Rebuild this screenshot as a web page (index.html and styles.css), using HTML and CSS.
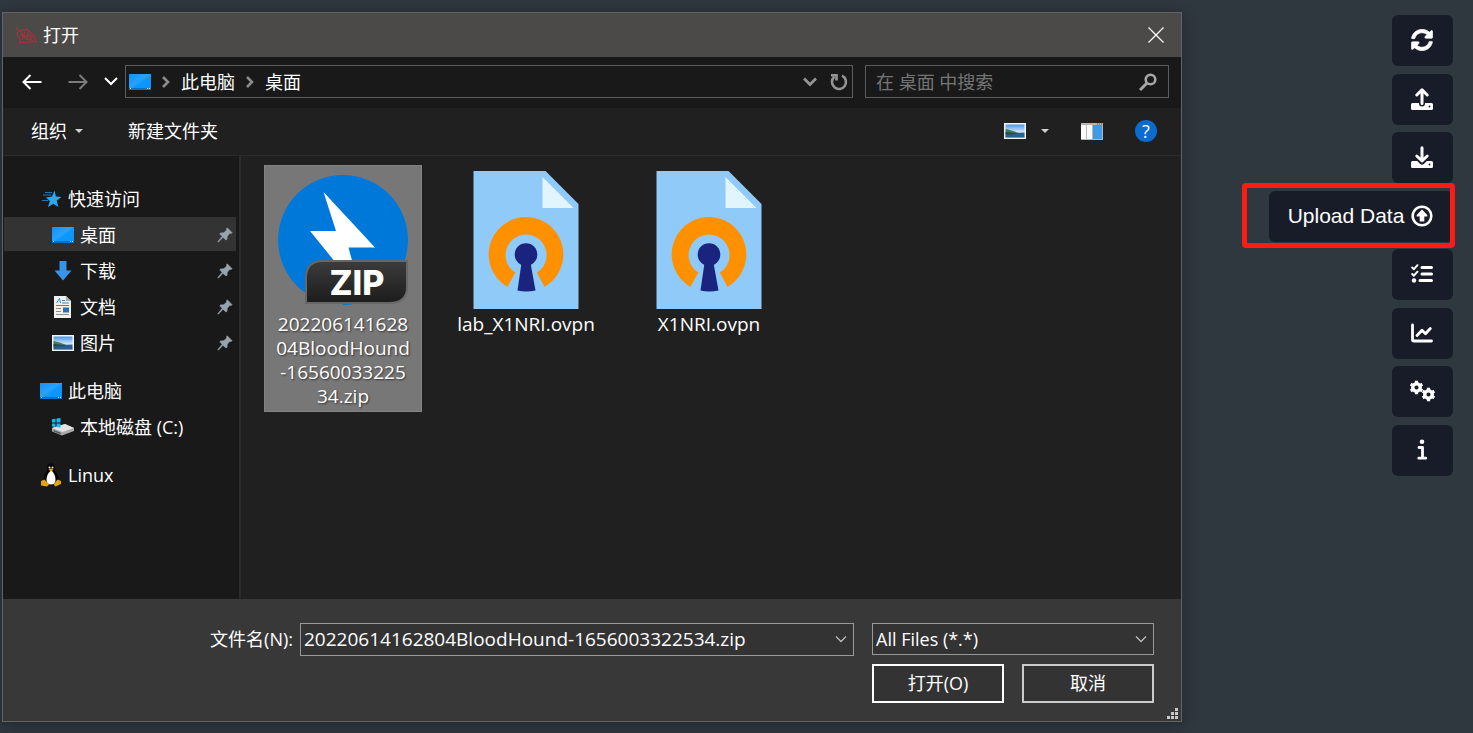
FILE: index.html
```html
<!DOCTYPE html>
<html lang="zh-CN">
<head>
<meta charset="utf-8">
<meta name="viewport" content="width=device-width, initial-scale=1">
<title>打开</title>
<link rel="stylesheet" href="styles.css">
</head>
<body>
<svg class="defs" aria-hidden="true">
  <defs>
    <linearGradient id="screen" x1="0" y1="0" x2="1" y2="1">
      <stop offset="0" stop-color="#1590f2"/><stop offset=".45" stop-color="#27a3ff"/><stop offset=".55" stop-color="#0c98ff"/><stop offset="1" stop-color="#0a94fb"/>
    </linearGradient>
    <linearGradient id="sky" x1="0" y1="0" x2="0" y2="1">
      <stop offset="0" stop-color="#4f95e6"/><stop offset=".6" stop-color="#d7ebfa"/><stop offset="1" stop-color="#8fb4d4"/>
    </linearGradient>
    <linearGradient id="badge" x1="0" y1="0" x2="0" y2="1">
      <stop offset="0" stop-color="#3c3c3c"/><stop offset="1" stop-color="#1c1c1c"/>
    </linearGradient>
    <symbol id="monitor" viewBox="0 0 22 16">
      <rect width="22" height="16" fill="url(#screen)"/><path d="M0 14h22v2H0z" fill="#0872c4"/><path d="M1 14h1v1H1zM18 14h1v1h-1zM20 14h1v1h-1z" fill="#fff"/>
    </symbol>
    <symbol id="photo" viewBox="0 0 22 16">
      <rect width="22" height="16" fill="#f4f4f4"/><rect x="1.5" y="1.5" width="19" height="13" fill="url(#sky)"/>
      <path d="M1.500 6c4 .5 9 2.500 14 4.500H1.500z" fill="#417f5b"/><path d="M1.500 10.500c6-1 12-.5 19-1v5h-19z" fill="#285f94"/><path d="M1.500 9c5 .3 9 1 14 1.800l-14 .7z" fill="#264e3d"/>
    </symbol>
    <symbol id="pin" viewBox="0 0 16 16">
      <path d="M10.200.8 15.200 5.800 13.800 6.500 12.900 6.300 10.300 9.200 10 12.300 8.800 12.900 6 10.200 1.300 15.200.8 14.700 5.100 9.300 2.700 6.800 3.500 6 6.800 5.700 9.700 3.100 9.500 2z" fill="#97a3ad" stroke="#97a3ad" stroke-width=".6"/>
    </symbol>
    <symbol id="ovpn" viewBox="0 0 105 138">
      <path d="M0 0h72l33 33v105H0z" fill="#90caf9"/><path d="M69 6v31h31z" fill="#e1f5fe"/>
      <path d="M34 115.800A37.300 37.300 0 1 1 71 115.800L63.400 101.500A20.500 20.500 0 1 0 41.800 101.500z" fill="#ff9100"/>
      <circle cx="52.500" cy="83.500" r="11.300" fill="#1a237e"/><path d="M48 92h9l5 27.500q-9.500 2.200-18 0z" fill="#1a237e"/>
    </symbol>
    <symbol id="chev" viewBox="0 0 12 8"><path d="m1 1.500 5 5 5-5" fill="none" stroke="currentColor" stroke-width="1.300"/></symbol>
    <symbol id="crumb" viewBox="0 0 8 12"><path d="m1 1 5 5-5 5" fill="none" stroke="#8b8b8b" stroke-width="2.600"/></symbol>
    <symbol id="gear" viewBox="0 0 16 16">
      <circle cx="8" cy="8" r="4" fill="none" stroke="currentColor" stroke-width="3.600"/>
      <path d="M8 .8v3M8 12.200v3M1.800 4.400l2.600 1.500M11.600 10.100l2.600 1.500M1.800 11.600l2.600-1.500M11.600 5.900l2.600-1.500" stroke="currentColor" stroke-width="3.400"/>
    </symbol>
  </defs>
</svg>

<main class="dialog">
  <header class="titlebar">
    <svg class="app-icon" viewBox="0 0 22 18" fill="none" stroke="#a5333a" stroke-width="1.100"><path d="m1 1 3 4 3-1q4-2 7 1l4 3 2 4 1 4-3-1-3 1-3 1-4-1-3 1 0-4-2-3-1-4M6 5l2 4-1 5M10 5l-1 4 3 5M13 6l-1 5 3 4M16 8l-1 4 3 3M5 8l4 3 5-2 4 2"/></svg>
    <h1 class="title">打开</h1>
    <button class="close" type="button" aria-label="关闭"><svg viewBox="0 0 16 16"><path d="m.5.5 15 15M15.500.5l-15 15" stroke="#fff" stroke-width="1.300"/></svg></button>
  </header>

  <nav class="navbar">
    <button class="nav-btn back" type="button" aria-label="后退"><svg viewBox="0 0 20 16"><path d="M19.500 8H2M8.500 1 1.500 8l7 7" fill="none" stroke="#fff" stroke-width="2"/></svg></button>
    <button class="nav-btn forward" type="button" aria-label="前进"><svg viewBox="0 0 20 16"><path d="M.5 8H18M11.500 1l7 7-7 7" fill="none" stroke="#7c7c7c" stroke-width="2"/></svg></button>
    <button class="nav-btn recent" type="button" aria-label="最近位置"><svg viewBox="0 0 14 9"><path d="m1 1 6 6 6-6" fill="none" stroke="#fff" stroke-width="2"/></svg></button>
    <div class="address">
      <svg class="monitor"><use href="#monitor"/></svg>
      <svg class="crumb"><use href="#crumb"/></svg>
      <a class="path" href="#pc">此电脑</a>
      <svg class="crumb"><use href="#crumb"/></svg>
      <a class="path" href="#desktop">桌面</a>
      <button class="addr-btn drop" type="button" aria-label="展开"><svg viewBox="0 0 14 10"><path d="m1 1.500 6 6 6-6" fill="none" stroke="#949494" stroke-width="2.800"/></svg></button>
      <button class="addr-btn reload" type="button" aria-label="刷新"><svg viewBox="0 0 18 18"><path d="M12 2.700A7 7 0 1 1 4.300 3.800M1 2.200h5.500v5.300" fill="none" stroke="#949494" stroke-width="2.600"/></svg></button>
    </div>
    <label class="search">
      <input class="search-input" type="search" placeholder="在 桌面 中搜索" aria-label="在桌面中搜索">
      <svg class="search-icon" viewBox="0 0 18 18"><circle cx="11.500" cy="6.500" r="4.800" fill="none" stroke="#a6a6a6" stroke-width="2.600"/><path d="m8 10-7 7" stroke="#a6a6a6" stroke-width="3"/></svg>
    </label>
  </nav>

  <div class="commands">
    <button class="cmd" type="button">组织<svg class="caret" viewBox="0 0 8 4"><path d="M0 0h8L4 4z" fill="#d0d0d0"/></svg></button>
    <button class="cmd" type="button">新建文件夹</button>
    <button class="cmd view" type="button" aria-label="更改视图"><svg class="monitor"><use href="#photo"/></svg><svg class="caret" viewBox="0 0 8 4"><path d="M0 0h8L4 4z" fill="#d0d0d0"/></svg></button>
    <button class="cmd preview" type="button" aria-label="预览窗格"><svg class="pane" viewBox="0 0 22 17"><path d="M0 0h22v17H0z" fill="#b6b6b6"/><path d="M0 2h5v14H0zM6 2h5v14H6z" fill="#fafafa"/><path d="M12 2h9v14h-9z" fill="#3f9be6"/><path d="M16 .5h1v1h-1zM18 .5h1v1h-1zM20 .5h1v1h-1z" fill="#444"/></svg></button>
    <button class="help" type="button" aria-label="帮助">?</button>
  </div>

  <div class="content">
    <aside class="sidebar">
      <ul class="tree">
        <li><a class="node" href="#quick"><svg class="star" viewBox="0 0 20 18"><path d="m12.500.5 1.400 6 5.600.4-4.800 3.600 1.600 6.500-5-3.300-5.300 3.500 1.800-6.100L4 7.500l6-.9z" fill="#28a8f5"/><path d="M3 2.500h7M1 5h8M0 10.500h6" stroke="#1b78b8" stroke-width="1.200"/></svg>快速访问</a></li>
        <li><a class="node child selected" href="#desktop"><svg class="monitor"><use href="#monitor"/></svg>桌面<svg class="pin"><use href="#pin"/></svg></a></li>
        <li><a class="node child" href="#downloads"><svg class="monitor down" viewBox="0 0 22 20"><path d="M7.500 0h7v9.500h5L11 19.500 2.500 9.500h5z" fill="#3593e8"/></svg>下载<svg class="pin"><use href="#pin"/></svg></a></li>
        <li><a class="node child" href="#documents"><svg class="monitor doc" viewBox="0 0 22 22"><path d="M2 0h12l5 5v17H2z" fill="#f1f1f1"/><path d="M14 0v5h5z" fill="#aaa"/><path d="m4.500 7 3-4.500L8.500 7M10 4.500h3M10 7h7M4 9.500h13" fill="none" stroke="#2b8fd6"/><path d="M4 12.500h5M4 15.500h5M4 18.500h13" stroke="#8c8c8c"/><path d="M11 11.500h6v5h-6z" fill="#356cab"/></svg>文档<svg class="pin"><use href="#pin"/></svg></a></li>
        <li><a class="node child" href="#pictures"><svg class="monitor"><use href="#photo"/></svg>图片<svg class="pin"><use href="#pin"/></svg></a></li>
      </ul>
      <ul class="tree">
        <li><a class="node" href="#pc"><svg class="monitor"><use href="#monitor"/></svg>此电脑</a></li>
        <li><a class="node child" href="#c"><svg class="monitor disk" viewBox="0 0 22 18"><path d="m0 10 13-4 9 4v3l-12 4.500-10-4z" fill="#a9a9a9"/><path d="m0 10 13-4 9 4-11.500 4z" fill="#e3e3e3"/><path d="m1.500 12 7 2.500v1.700l-7-2.700z" fill="#555"/><path d="M0 1.300 3.500.8v3.700H0zM4.500.6 8.500 0v4.500h-4zM0 5.500h3.500V9L0 8.600zM4.500 5.500h4v4l-4-.5z" fill="#17b7ee"/></svg>本地磁盘 (C:)</a></li>
      </ul>
      <ul class="tree">
        <li><a class="node" href="#linux"><svg class="monitor tux" viewBox="0 0 22 24"><path d="M11 .5c-3 0-4 2-3.700 5 .2 3-3.800 6-3.800 11 0 3 3 6 7.500 6s7.500-2.500 7.500-6c0-5-4-8-3.800-11 .2-3-.9-5-3.700-5z" fill="#070707"/><path d="M10.500 8C8 10 6.500 13 6.500 17c0 3 2 4.500 4.500 4.500s4.500-1.500 4.500-4.500c0-4-1.500-7-3.500-9z" fill="#fff"/><circle cx="9.500" cy="4.500" r="1" fill="#eee"/><circle cx="12.500" cy="4.500" r="1" fill="#eee"/><path d="m8.500 6.500 2.500-1 2.500 1-2.500 2z" fill="#efa90b"/><path d="m1 18 3.500-1.500L9 21.500l-2 2-6-1zM21 18l-3.500-1.500-4 5 2 2 5.500-2.500z" fill="#e3a50d"/></svg>Linux</a></li>
      </ul>
    </aside>

    <section class="files" aria-label="文件">
      <a class="file active" href="#zip">
        <svg class="file-icon" viewBox="0 0 138 138"><circle cx="69" cy="69" r="65" fill="#0078d9"/><path d="m49.500 21 51.500 55.500H74.500L80 97H66L36 60h26z" fill="#fff"/><path d="M31.500 126A65 65 0 0 0 69 134.500V128z" fill="#777"/><path d="M49 90h84v26q0 16-18 16H32v-25q0-17 17-17z" fill="url(#badge)" stroke="#676767" stroke-width="2"/><text class="zip" x="83" y="124" text-anchor="middle">ZIP</text></svg>
        <span class="file-name">20220614162804BloodHound-1656003322534.zip</span>
      </a>
      <a class="file" href="#lab"><svg class="file-icon"><use href="#ovpn"/></svg><span class="file-name">lab_X1NRI.ovpn</span></a>
      <a class="file" href="#x1"><svg class="file-icon"><use href="#ovpn"/></svg><span class="file-name">X1NRI.ovpn</span></a>
    </section>
  </div>

  <form class="footer">
    <label class="name-label" for="fname">文件名(N):</label>
    <div class="combo name-combo">
      <input id="fname" class="field" type="text" value="20220614162804BloodHound-1656003322534.zip">
      <svg class="chev"><use href="#chev"/></svg>
    </div>
    <div class="combo type-combo">
      <select class="field" aria-label="文件类型"><option>All Files (*.*)</option></select>
      <svg class="chev"><use href="#chev"/></svg>
    </div>
    <div class="actions">
      <button class="btn primary" type="button">打开(O)</button>
      <button class="btn" type="button">取消</button>
    </div>
    <svg class="grip" viewBox="0 0 11 11"><path d="M8 0h3v3H8zM4 4h3v3H4zM8 4h3v3H8zM0 8h3v3H0zM4 8h3v3H4zM8 8h3v3H8z" fill="#c8c8c8"/></svg>
  </form>
</main>

<aside class="menu">
  <button class="tool" type="button" aria-label="Refresh"><svg viewBox="0 0 512 512"><path fill="currentColor" d="M370.720 133.280C339.458 104.008 298.888 87.962 255.848 88c-77.458.068-144.328 53.178-162.791 126.850-1.344 5.363-6.122 9.150-11.651 9.150H24.103c-7.498 0-13.194-6.807-11.807-14.176C33.933 94.924 134.813 8 256 8c66.448 0 126.791 26.136 171.315 68.685L463.030 40.970C478.149 25.851 504 36.559 504 57.941V192c0 13.255-10.745 24-24 24H345.941c-21.382 0-32.090-25.851-16.971-40.971l41.750-41.749zM32 296h134.059c21.382 0 32.090 25.851 16.971 40.971l-41.750 41.750c31.262 29.273 71.835 45.319 114.876 45.280 77.418-.070 144.315-53.144 162.787-126.849 1.344-5.363 6.122-9.150 11.651-9.150h57.304c7.498 0 13.194 6.807 11.807 14.176C478.067 417.076 377.187 504 256 504c-66.448 0-126.791-26.136-171.315-68.685L48.970 471.030C33.851 486.149 8 475.441 8 454.059V320c0-13.255 10.745-24 24-24z" stroke="currentColor" stroke-width="14"/></svg></button>
  <button class="tool" type="button" aria-label="Export Graph"><svg viewBox="0 0 22 22"><path d="M1.500 15H8v.5a3 3 0 0 0 6 0V15h6.500q1.500 0 1.500 1.500v4q0 1.500-1.500 1.500h-19Q0 22 0 20.500v-4Q0 15 1.500 15z" fill="currentColor"/><path d="M11 15.500V2M5.800 7 11 1.800 16.200 7" fill="none" stroke="currentColor" stroke-width="3" stroke-linecap="round" stroke-linejoin="round"/><circle cx="18.500" cy="18.500" r=".9" fill="#171c28"/></svg></button>
  <button class="tool" type="button" aria-label="Import Graph"><svg viewBox="0 0 22 22"><path d="M1.500 15h4.700l3 3q1.800 1.600 3.600 0l3-3h4.700q1.500 0 1.500 1.500v4q0 1.500-1.500 1.500h-19Q0 22 0 20.500v-4Q0 15 1.500 15z" fill="currentColor"/><path d="M11 1.800v13M5.800 10l5.200 5 5.200-5" fill="none" stroke="currentColor" stroke-width="3" stroke-linecap="round" stroke-linejoin="round"/><circle cx="18.500" cy="18.500" r=".9" fill="#171c28"/></svg></button>
  <div class="upload-wrap">
    <button class="tool upload" type="button">Upload Data<svg viewBox="0 0 22 22"><circle cx="11" cy="11" r="9.300" fill="none" stroke="currentColor" stroke-width="2.600"/><path d="M11 4.500 16.300 10v1.500h-3v5H8.700v-5h-3V10z" fill="currentColor"/></svg></button>
    <span class="highlight"></span>
  </div>
  <button class="tool" type="button" aria-label="Tasks"><svg viewBox="0 0 22 22"><g fill="none" stroke="currentColor" stroke-linecap="round" stroke-linejoin="round"><path d="M11 4.500h9.500M11 11h9.500M9 17.500h11.500" stroke-width="3"/><path d="m1.200 4.500 1.700 1.700 3.600-4M1.200 11l1.700 1.700 3.600-4" stroke-width="2"/></g><circle cx="3" cy="17.500" r="2.200" fill="currentColor"/></svg></button>
  <button class="tool" type="button" aria-label="Statistics"><svg viewBox="0 0 22 22"><g fill="none" stroke="currentColor" stroke-width="2.800" stroke-linecap="round" stroke-linejoin="round"><path d="M1.500 3v14.500q0 1.500 1.500 1.500h17.500"/><path d="m6 13.500 5-5.200 3.500 3.500 4.800-5.300"/></g></svg></button>
  <button class="tool" type="button" aria-label="Settings"><svg class="gears" viewBox="0 0 27 22"><use href="#gear" x="0" y="0" width="15" height="15"/><use href="#gear" x="12" y="7" width="15" height="15"/></svg></button>
  <button class="tool" type="button" aria-label="About"><svg viewBox="0 0 22 22"><circle cx="11" cy="2.800" r="2.300" fill="currentColor"/><path d="M8 8.500h3.500v10.200M7.800 19.200h7" fill="none" stroke="currentColor" stroke-width="2.800" stroke-linecap="round" stroke-linejoin="round"/></svg></button>
</aside>
</body>
</html>
```

FILE: styles.css
```css
* { box-sizing: border-box; }

body {
  margin: 0;
  min-height: 100vh;
  display: flex;
  align-items: stretch;
  gap: 61px;
  padding: 12px 20px 11px 2px;
  background: #2f373f;
  color: #fff;
  font-family: "Open Sans", "Noto Sans CJK SC", sans-serif;
  font-size: 18px;
  line-height: 24px;
}

button, input, select { font: inherit; color: inherit; }
button { padding: 0; border: 0; background: none; }
a { color: inherit; text-decoration: none; }
svg { display: block; flex: none; }
.defs { position: absolute; width: 0; height: 0; }

.dialog {
  flex: 1;
  display: flex;
  flex-direction: column;
  border: 1px solid #626466;
  background: #191919;
  box-shadow: 0 2px 14px rgba(0, 0, 0, .3);
}

.titlebar {
  display: flex;
  align-items: center;
  height: 44px;
  padding: 0 17px 1px 12px;
  background: #4c4a48;
}
.app-icon { width: 22px; height: 18px; }
.title { margin: 0 auto 0 6px; font-size: 18px; font-weight: 400; }
.close svg { width: 16px; height: 16px; }

.navbar {
  display: flex;
  align-items: center;
  height: 51px;
  padding: 0 12px 2px 19px;
}
.nav-btn svg { width: 20px; height: 16px; }
.forward { margin-left: 26px; }
.recent { margin: 0 7px 0 16px; }
.nav-btn.recent svg { width: 14px; height: 9px; }
.address, .search {
  display: flex;
  align-items: center;
  height: 33px;
  border: 1px solid #5c5c5c;
}
.address { flex: 1; padding: 0 4px 0 3px; }
.monitor { width: 22px; height: 16px; }
.crumb { width: 8px; height: 12px; margin: 0 11px; }
.drop { margin-left: auto; }
.drop svg { width: 14px; height: 10px; }
.reload { margin-left: 13px; }
.reload svg { width: 18px; height: 18px; }
.search { width: 304px; margin-left: 12px; padding: 0 11px 0 10px; }
.search-input {
  flex: 1;
  min-width: 0;
  padding: 0;
  border: 0;
  outline: 0;
  background: none;
}
.search-input::placeholder { color: #757575; opacity: 1; }
.search-icon { width: 18px; height: 18px; }

.commands {
  display: flex;
  align-items: center;
  gap: 32px;
  height: 48px;
  padding: 0 24px 1px 28px;
  background: #202020;
  border-bottom: 1px solid #2b2b2b;
}
.cmd { display: flex; align-items: center; }
.cmd:first-child { margin-right: 13px; }
.caret { width: 8px; height: 4px; margin-left: 8px; }
.view { margin-left: auto; }
.view .caret { margin-left: 15px; }
.pane { width: 22px; height: 17px; }
.help {
  width: 22px;
  height: 22px;
  border-radius: 50%;
  background: #0a6cce;
  line-height: 22px;
}

.content { flex: 1; display: flex; }
.sidebar {
  width: 238px;
  padding: 25px 3px 0 1px;
  border-right: 2px solid #2b2b2b;
}
.tree { margin: 0 0 14px; padding: 0; list-style: none; }
.node {
  display: flex;
  align-items: center;
  gap: 6px;
  height: 34px;
  margin-bottom: 2px;
  padding: 1px 3px 0 36px;
}
.child { padding-left: 48px; }
.selected { background: #333; }
.star { width: 20px; height: 18px; margin-left: 2px; }
.down { height: 20px; }
.doc { height: 22px; }
.disk { height: 18px; }
.tux { height: 24px; }
.pin { width: 16px; height: 16px; margin-left: auto; }

.files {
  flex: 1;
  display: flex;
  flex-wrap: wrap;
  align-items: flex-start;
  align-content: flex-start;
  gap: 25px;
  padding: 9px 23px;
  background: #202020;
}
.file {
  display: flex;
  flex-direction: column;
  align-items: center;
  gap: 3px;
  width: 158px;
  padding: 5px 0 3px;
  border: 1px solid transparent;
  font-size: 19px;
  text-align: center;
}
.file-name { padding: 0 5px; word-break: break-all; }
.active { border-color: #828282; background: #777; text-shadow: 1px 1px 2px #333; }
.active .file-name { padding: 0 10px; }
.file-icon { width: 138px; height: 138px; }
.zip { font: 800 34px "Inter", sans-serif; fill: #fff; text-shadow: none; }

.footer {
  position: relative;
  display: grid;
  grid-template-columns: 1fr 554px 282px;
  align-items: start;
  align-content: start;
  gap: 8px 18px;
  padding: 24px 27px 18px 0;
  background: #383838;
}
.name-label { margin-right: -11px; padding-top: 4px; text-align: right; }
.combo { position: relative; }
.actions { grid-column: 3; display: flex; gap: 18px; }
.field {
  display: block;
  width: 100%;
  height: 33px;
  padding: 0 32px 1px 3px;
  border: 1px solid #999;
  border-radius: 0;
  outline: 0;
  appearance: none;
  background: #333;
  font-size: 19px;
}
.type-combo .field { height: 32px; font-size: 18px; }
.chev {
  position: absolute;
  right: 7px;
  top: 12px;
  width: 12px;
  height: 8px;
  color: #bbb;
  pointer-events: none;
}
.btn {
  flex: 1 1 0;
  height: 39px;
  padding-bottom: 1px;
  border: 2px solid #ccc;
  background: #333;
}
.primary { border-color: #fff; }
.grip { position: absolute; right: 3px; bottom: 2px; width: 11px; height: 11px; }

.menu {
  display: flex;
  flex-direction: column;
  align-items: flex-end;
  width: 210px;
  padding-top: 3px;
  font-family: "Liberation Sans", Arial, sans-serif;
}
.tool {
  display: flex;
  align-items: center;
  justify-content: center;
  gap: 7px;
  width: 61px;
  height: 51px;
  padding: 0 1px 1px 0;
  border-radius: 6px;
  background: #171c28;
}
.tool svg { width: 22px; height: 22px; }
.tool .gears { width: 27px; }
.menu > :nth-child(odd) { margin-bottom: 8px; }
.menu > :nth-child(even) { margin-bottom: 7px; }
.upload-wrap { position: relative; }
.upload { width: 184px; font-size: 21px; }
.highlight {
  position: absolute;
  inset: -8px -2px -6px -27px;
  border: 5px solid #fb1d12;
  border-radius: 4px;
  pointer-events: none;
}
```
